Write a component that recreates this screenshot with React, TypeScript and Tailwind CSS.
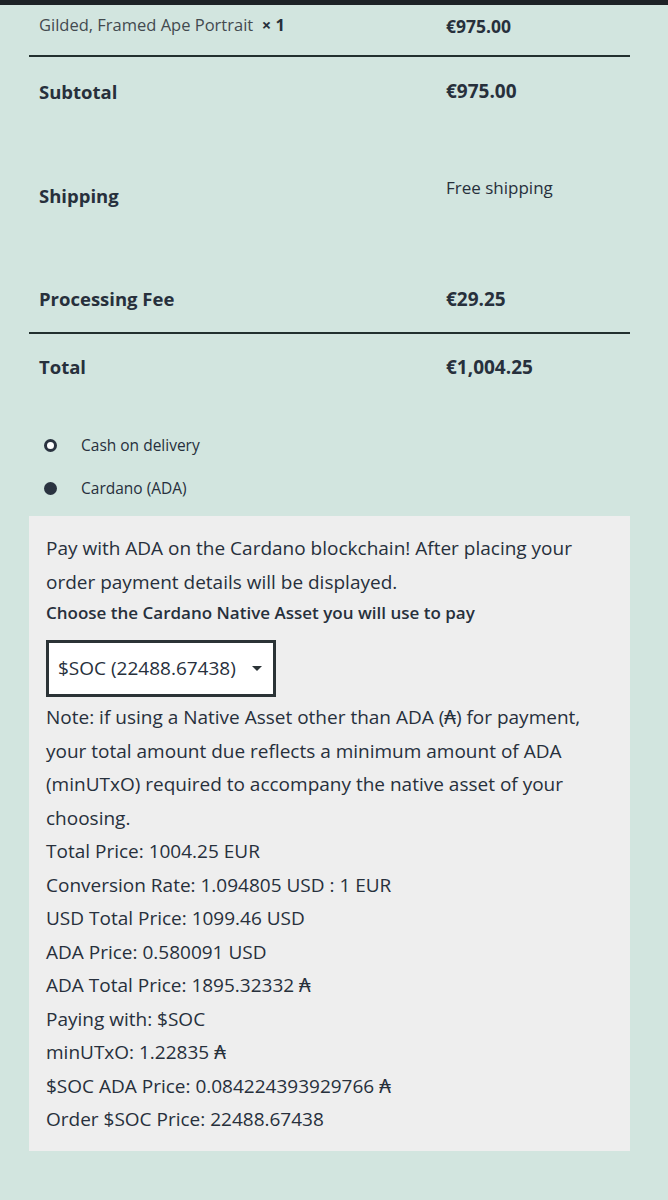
import React from "react";

const Ada = () => <span>₳</span>;

export default function App() {
  return (
    <div
      className="w-[668px] h-[1200px] bg-[#d2e5df] text-[#27303c] overflow-hidden"
      style={{ fontFamily: '"Open Sans", "Noto Sans", sans-serif' }}
    >
      <div className="h-[5px] bg-[#1d2226]" />
      <div className="ml-[29px] mr-[38px]">
        {/* item row */}
        <div className="flex items-start pt-[8px] h-[52px] border-b-2 border-[#22302f] pl-[10px]">
          <div className="w-[407px] text-[16.5px] text-[#434a4f]">
            Gilded, Framed Ape Portrait&nbsp;&nbsp;<span className="font-bold text-[#27303c]">× 1</span>
          </div>
          <div className="text-[17.5px] font-bold">€975.00</div>
        </div>
        {/* subtotal */}
        <div className="flex items-center h-[69px] pl-[10px]">
          <div className="w-[407px] text-[18.5px] font-bold">Subtotal</div>
          <div className="text-[19px] font-bold">€975.00</div>
        </div>
        {/* shipping */}
        <div className="flex h-[140px] pl-[10px]">
          <div className="w-[407px] self-center text-[18.5px] font-bold">Shipping</div>
          <div className="pt-[49px] text-[17px]">Free shipping</div>
        </div>
        {/* processing */}
        <div className="flex items-center h-[68px] border-b-2 border-[#22302f] pl-[10px]">
          <div className="w-[407px] text-[18.5px] font-bold">Processing Fee</div>
          <div className="text-[19px] font-bold">€29.25</div>
        </div>
        {/* total */}
        <div className="flex items-center h-[66px] pl-[10px]">
          <div className="w-[407px] text-[18.5px] font-bold">Total</div>
          <div className="text-[19px] font-bold">€1,004.25</div>
        </div>

        {/* payment methods */}
        <div className="pt-[34px] pl-[15px] flex flex-col gap-[20px]">
          <label className="flex items-center h-[23px] gap-[24px] text-[15.5px]">
            <span className="w-[13px] h-[13px] rounded-full border-[3px] border-[#2a3340] bg-white" />
            Cash on delivery
          </label>
          <label className="flex items-center h-[23px] gap-[24px] text-[15.5px]">
            <span className="w-[13px] h-[13px] rounded-full bg-[#2a3340]" />
            Cardano (ADA)
          </label>
        </div>

        {/* box */}
        <div className="mt-[16px] bg-[#eeeeee] pl-[17px] pr-[36px] pt-[16px] pb-[14px] text-[19px] leading-[33.5px]">
          <p>Pay with ADA on the Cardano blockchain! After placing your order payment details will be displayed.</p>
          <p className="text-[17px] font-semibold leading-[28px]">
            Choose the Cardano Native Asset you will use to pay
          </p>
          <div className="mt-[13px] mb-[4px] w-[230px] h-[57px] border-[3px] border-[#2b3336] bg-white flex items-center pl-[9px] pr-[9px] justify-between">
            <span>$SOC (22488.67438)</span>
            <svg width="10" height="6" viewBox="0 0 10 6" className="mr-[2px]">
              <path d="M0 0 L10 0 L5 5 Z" fill="#2b3336" />
            </svg>
          </div>
          <p>
            Note: if using a Native Asset other than ADA (<Ada />) for payment, your total amount due reflects a minimum amount of ADA (minUTxO) required to accompany the native asset of your choosing.
          </p>
          <p>Total Price: 1004.25 EUR</p>
          <p>Conversion Rate: 1.094805 USD : 1 EUR</p>
          <p>USD Total Price: 1099.46 USD</p>
          <p>ADA Price: 0.580091 USD</p>
          <p>ADA Total Price: 1895.32332 <Ada /></p>
          <p>Paying with: $SOC</p>
          <p>minUTxO: 1.22835 <Ada /></p>
          <p>$SOC ADA Price: 0.084224393929766 <Ada /></p>
          <p>Order $SOC Price: 22488.67438</p>
        </div>
      </div>
    </div>
  );
}
